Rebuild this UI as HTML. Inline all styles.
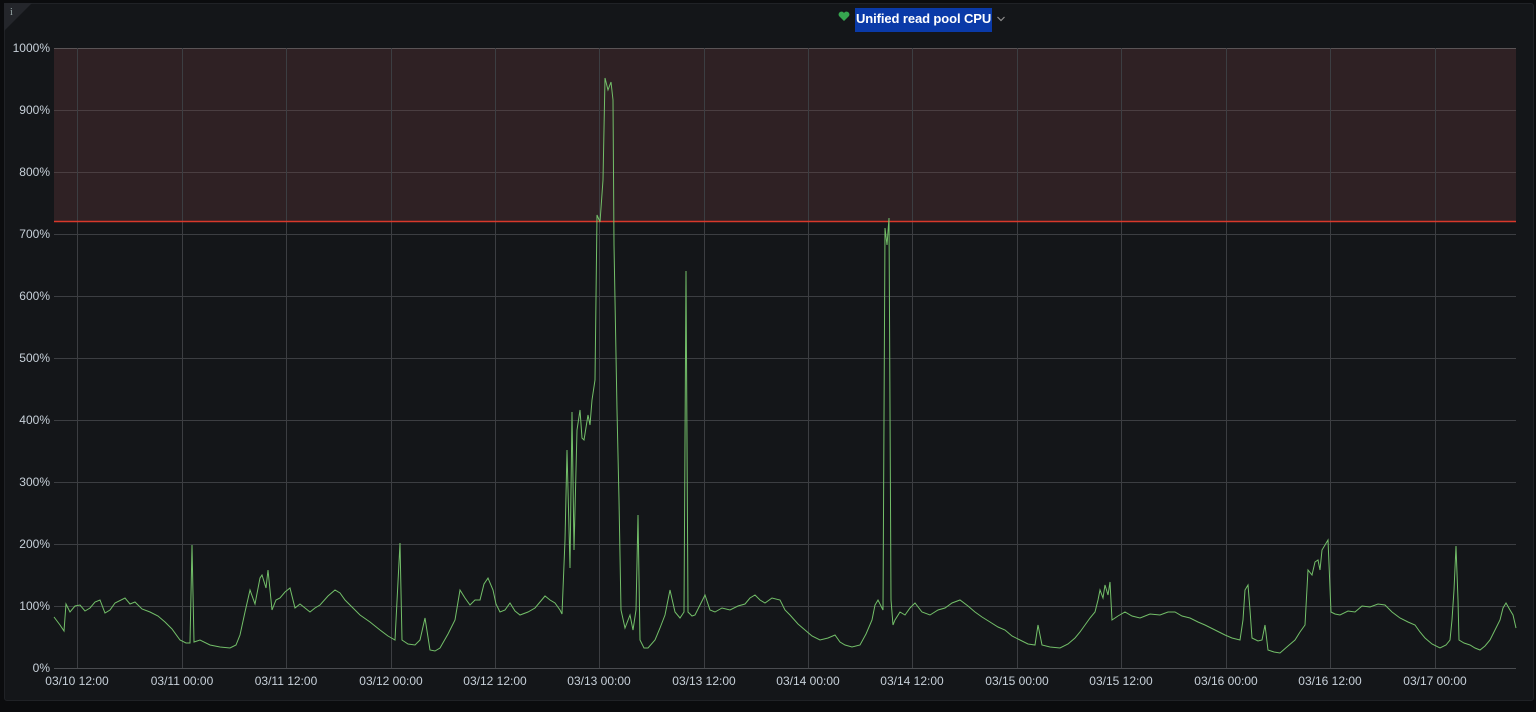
<!DOCTYPE html>
<html><head><meta charset="utf-8"><style>
html,body{margin:0;padding:0;background:#0b0c0e;width:1536px;height:712px;overflow:hidden;font-family:"Liberation Sans",sans-serif}
.panel{position:absolute;left:4px;top:3px;width:1528px;height:696px;background:#141619;border:1px solid #202226;border-radius:3px}
.title{position:absolute;top:8px;left:855px;height:24px;line-height:21px;background:#0a3aa8;color:#fff;font-weight:bold;font-size:13px;padding:0 1px;letter-spacing:-0.1px}
</style></head><body>
<div class="panel"></div>
<svg style="position:absolute;left:4px;top:3px" width="28" height="28"><polygon points="0,0 28,0 0,28" fill="#24262b"/><text x="6" y="12" font-size="10" fill="#9aa" font-family="Liberation Serif">i</text></svg>
<svg style="position:absolute;left:838px;top:11px" width="12" height="11"><path d="M6 10 L1 5 A2.6 2.6 0 0 1 6 2 A2.6 2.6 0 0 1 11 5 Z" fill="#36a64f"/></svg>
<div class="title">Unified read pool CPU</div>
<svg style="position:absolute;left:996px;top:15px" width="10" height="8"><path d="M1.5 2 L5 5.5 L8.5 2" stroke="#8e8e8e" stroke-width="1.2" fill="none"/></svg>
<svg style="position:absolute;left:0;top:0" width="1536" height="712" font-family="Liberation Sans" font-size="12" fill="#c7d0d9">
<rect x="54" y="48" width="1462" height="173" fill="#2f2124"/>
<g stroke="#3c3e42" stroke-width="1">
<line x1="54" y1="48.5" x2="1516" y2="48.5" stroke="#5a5456"/>
<line x1="54" y1="110.5" x2="1516" y2="110.5" stroke="#4a3e41"/>
<line x1="54" y1="172.5" x2="1516" y2="172.5" stroke="#4a3e41"/>
<line x1="54" y1="234.5" x2="1516" y2="234.5"/><line x1="54" y1="296.5" x2="1516" y2="296.5"/>
<line x1="54" y1="358.5" x2="1516" y2="358.5"/><line x1="54" y1="420.5" x2="1516" y2="420.5"/>
<line x1="54" y1="482.5" x2="1516" y2="482.5"/><line x1="54" y1="544.5" x2="1516" y2="544.5"/>
<line x1="54" y1="606.5" x2="1516" y2="606.5"/><line x1="54" y1="668.5" x2="1516" y2="668.5" stroke="#4a4c50"/>
<line x1="77.5" y1="48" x2="77.5" y2="668"/><line x1="182.5" y1="48" x2="182.5" y2="668"/><line x1="286.5" y1="48" x2="286.5" y2="668"/><line x1="391.5" y1="48" x2="391.5" y2="668"/><line x1="495.5" y1="48" x2="495.5" y2="668"/><line x1="599.5" y1="48" x2="599.5" y2="668"/><line x1="704.5" y1="48" x2="704.5" y2="668"/><line x1="808.5" y1="48" x2="808.5" y2="668"/><line x1="912.5" y1="48" x2="912.5" y2="668"/><line x1="1017.5" y1="48" x2="1017.5" y2="668"/><line x1="1121.5" y1="48" x2="1121.5" y2="668"/><line x1="1226.5" y1="48" x2="1226.5" y2="668"/><line x1="1330.5" y1="48" x2="1330.5" y2="668"/><line x1="1435.5" y1="48" x2="1435.5" y2="668"/>
</g>
<line x1="54" y1="221.5" x2="1516" y2="221.5" stroke="#d8392b" stroke-width="1.5"/>
<g text-anchor="end">
<text x="50" y="52">1000%</text><text x="50" y="114">900%</text><text x="50" y="176">800%</text><text x="50" y="238">700%</text><text x="50" y="300">600%</text><text x="50" y="362">500%</text><text x="50" y="424">400%</text><text x="50" y="486">300%</text><text x="50" y="548">200%</text><text x="50" y="610">100%</text><text x="50" y="672">0%</text>
</g>
<g text-anchor="middle">
<text x="77" y="685">03/10 12:00</text><text x="182" y="685">03/11 00:00</text><text x="286" y="685">03/11 12:00</text><text x="391" y="685">03/12 00:00</text><text x="495" y="685">03/12 12:00</text><text x="599" y="685">03/13 00:00</text><text x="704" y="685">03/13 12:00</text><text x="808" y="685">03/14 00:00</text><text x="912" y="685">03/14 12:00</text><text x="1017" y="685">03/15 00:00</text><text x="1121" y="685">03/15 12:00</text><text x="1226" y="685">03/16 00:00</text><text x="1330" y="685">03/16 12:00</text><text x="1435" y="685">03/17 00:00</text>
</g>
<polyline fill="none" stroke="#73bf69" stroke-width="1" points="54,617 60,625 64,631 66,604 70,612 75,606 80,605 85,611 90,608 95,602 100,600 105,613 110,610 115,603 125,598 130,604 135,602 142,609 150,612 158,616 165,622 172,629 180,640 186,643 190,643 192,545 194,642 200,640 210,645 220,647 230,648 236,645 240,635 245,612 250,590 255,604 260,578 262,575 266,588 268,570 272,610 276,600 280,598 285,592 290,588 295,608 300,604 310,612 315,608 320,605 328,596 335,590 340,593 345,600 352,607 360,615 370,622 380,630 388,636 395,640 400,543 402,640 408,644 415,645 420,640 425,618 430,650 435,651 440,648 448,634 455,620 460,590 465,598 470,605 475,600 480,600 484,584 488,578 493,590 496,604 500,612 505,610 510,603 515,611 520,615 528,612 535,608 540,602 545,596 550,600 555,603 560,610 562,614 565,540 567,450 570,568 572,412 574,550 577,430 580,410 582,438 584,440 588,415 590,425 592,400 595,380 597,215 600,222 603,180 605,78 608,90 611,82 613,100 614,245 617,410 619,500 621,610 625,628 630,615 633,630 636,610 638,515 640,640 644,648 648,648 655,640 660,628 665,615 670,590 675,612 680,618 684,612 686,271 688,612 692,616 695,615 700,605 705,595 710,610 715,612 722,608 730,610 738,606 745,604 750,598 755,595 760,600 765,603 772,598 780,600 785,610 790,615 798,624 805,630 812,636 820,640 828,638 835,635 840,642 845,645 852,647 860,645 866,634 872,620 875,605 878,600 883,610 885,228 887,245 889,218 891,600 893,625 895,620 900,612 905,615 910,608 915,603 922,612 930,615 938,610 945,608 952,603 960,600 968,606 975,612 982,617 990,622 998,627 1005,630 1012,636 1020,640 1028,644 1035,645 1038,625 1042,645 1050,647 1060,648 1068,644 1075,638 1080,632 1085,625 1090,618 1095,612 1098,600 1100,590 1103,598 1105,585 1108,595 1110,582 1112,620 1118,616 1125,612 1132,616 1140,618 1150,614 1160,615 1168,612 1175,612 1182,616 1190,618 1198,622 1205,625 1215,630 1225,635 1232,638 1240,640 1243,620 1245,590 1248,585 1250,610 1252,638 1258,641 1262,640 1265,625 1268,650 1274,652 1280,653 1288,646 1295,640 1300,632 1305,625 1308,570 1312,575 1315,562 1318,560 1320,570 1322,550 1325,545 1328,540 1331,612 1335,614 1340,615 1348,611 1355,612 1362,606 1370,607 1378,604 1385,605 1392,612 1400,618 1408,622 1415,625 1420,632 1425,638 1432,644 1440,648 1446,645 1450,640 1452,620 1454,590 1456,546 1458,600 1459,640 1464,643 1470,645 1475,648 1480,650 1485,646 1490,640 1495,630 1500,620 1503,608 1506,603 1510,610 1513,615 1516,628"/>
</svg>
</body></html>
